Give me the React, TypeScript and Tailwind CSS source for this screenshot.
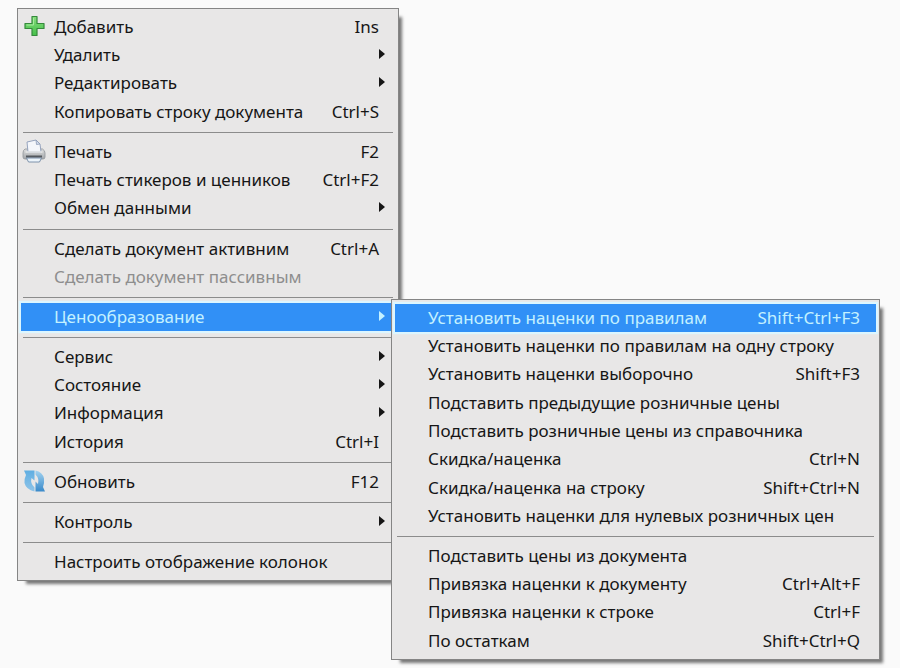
import { ReactNode } from 'react'
import clsx from 'clsx'

interface MenuItem {
  label: string
  shortcut?: string
  icon?: ReactNode
  disabled?: boolean
  active?: boolean
  submenu?: boolean
  children?: MenuItem[][]
}

function PlusIcon() {
  return (
    <svg viewBox="0 0 24 24" className="size-6" aria-hidden="true">
      <defs>
        <linearGradient id="plus" x1="0" y1="0" x2="0" y2="1">
          <stop offset="0" stopColor="#86dd7c" />
          <stop offset="1" stopColor="#45c04a" />
        </linearGradient>
      </defs>
      <path
        d="M10 2.500h5v7h7v5h-7v7h-5v-7h-7v-5h7z"
        fill="url(#plus)"
        stroke="#358a3c"
        strokeWidth="1.2"
        strokeLinejoin="round"
      />
      <path d="M11.500 4v7H4.500" fill="none" stroke="#a5eb9c" strokeWidth="1" />
    </svg>
  )
}

function PrinterIcon() {
  return (
    <svg viewBox="0 0 24 24" className="size-6" aria-hidden="true">
      <defs>
        <linearGradient id="printer" x1="0" y1="0" x2="0" y2="1">
          <stop offset="0" stopColor="#dcdddd" />
          <stop offset="0.5" stopColor="#bfc1c3" />
          <stop offset="1" stopColor="#a3a6aa" />
        </linearGradient>
      </defs>
      <path
        d="M3 10h17.500q2.500 1.500 2.500 4v4q0 2-2 2H3q-2 0-2-2v-4q0-3 2-4z"
        fill="url(#printer)"
        stroke="#909499"
        strokeWidth="0.8"
      />
      <path d="M6 13L5 3l9-2 4 4 1 8z" fill="#f4f6fb" stroke="#8b9bb8" strokeWidth="0.9" />
      <path d="M14 1l.5 4.500L18 5z" fill="#d3dcec" stroke="#8b9bb8" strokeWidth="0.8" />
      <path d="M3.500 13h17" stroke="#e9eaea" strokeWidth="1.5" />
      <path d="M4 17.500h16" stroke="#54595f" strokeWidth="2" />
      <path d="M4.500 19h15l-2 4h-11z" fill="#edf5fb" stroke="#7389a3" strokeWidth="0.9" />
    </svg>
  )
}

function RefreshIcon() {
  return (
    <svg viewBox="0 0 24 24" className="size-6" aria-hidden="true">
      <defs>
        <linearGradient id="refresh-left" x1="0" y1="0" x2="0" y2="1">
          <stop offset="0" stopColor="#5faee2" />
          <stop offset="1" stopColor="#8fc4e8" />
        </linearGradient>
        <linearGradient id="refresh-right" x1="0" y1="0" x2="0" y2="1">
          <stop offset="0" stopColor="#a3d3f0" />
          <stop offset="1" stopColor="#3a8aca" />
        </linearGradient>
      </defs>
      <path
        d="M2 1.500h10.500v10L9.500 9q-1.500 5.500 3 9.500v4Q4 20.500 2.500 14q-.5-4 1.500-8z"
        fill="url(#refresh-left)"
      />
      <path
        d="M23 22.500H13.500v-10l2.500 2.500q1.500-5.500-2.500-9.500v-4Q20.500 3 22 9.500q.5 4.500-1 8.500z"
        fill="url(#refresh-right)"
      />
    </svg>
  )
}

const pricingMenu: MenuItem[][] = [
  [
    { label: 'Установить наценки по правилам', shortcut: 'Shift+Ctrl+F3', active: true },
    { label: 'Установить наценки по правилам на одну строку' },
    { label: 'Установить наценки выборочно', shortcut: 'Shift+F3' },
    { label: 'Подставить предыдущие розничные цены' },
    { label: 'Подставить розничные цены из справочника' },
    { label: 'Скидка/наценка', shortcut: 'Ctrl+N' },
    { label: 'Скидка/наценка на строку', shortcut: 'Shift+Ctrl+N' },
    { label: 'Установить наценки для нулевых розничных цен' }
  ],
  [
    { label: 'Подставить цены из документа' },
    { label: 'Привязка наценки к документу', shortcut: 'Ctrl+Alt+F' },
    { label: 'Привязка наценки к строке', shortcut: 'Ctrl+F' },
    { label: 'По остаткам', shortcut: 'Shift+Ctrl+Q' }
  ]
]

const mainMenu: MenuItem[][] = [
  [
    { label: 'Добавить', shortcut: 'Ins', icon: <PlusIcon /> },
    { label: 'Удалить', submenu: true },
    { label: 'Редактировать', submenu: true },
    { label: 'Копировать строку документа', shortcut: 'Ctrl+S' }
  ],
  [
    { label: 'Печать', shortcut: 'F2', icon: <PrinterIcon /> },
    { label: 'Печать стикеров и ценников', shortcut: 'Ctrl+F2' },
    { label: 'Обмен данными', submenu: true }
  ],
  [
    { label: 'Сделать документ активним', shortcut: 'Ctrl+A' },
    { label: 'Сделать документ пассивным', disabled: true }
  ],
  [{ label: 'Ценообразование', submenu: true, active: true, children: pricingMenu }],
  [
    { label: 'Сервис', submenu: true },
    { label: 'Состояние', submenu: true },
    { label: 'Информация', submenu: true },
    { label: 'История', shortcut: 'Ctrl+I' }
  ],
  [{ label: 'Обновить', shortcut: 'F12', icon: <RefreshIcon /> }],
  [{ label: 'Контроль', submenu: true }],
  [{ label: 'Настроить отображение колонок' }]
]

function MenuRow({ item }: { item: MenuItem }) {
  return (
    <li role="none" className="relative nth-[3n]:mb-px">
      <button
        type="button"
        role="menuitem"
        disabled={item.disabled}
        aria-haspopup={item.submenu ? 'menu' : undefined}
        aria-expanded={item.children ? true : undefined}
        className={clsx(
          'flex h-7 w-full items-center pr-4 pl-px text-left whitespace-nowrap',
          item.active && 'bg-[#3190f6] text-[#c4f1ff] shadow-[0_0_1px_2px_#dcf6ff]',
          item.disabled && 'text-[#8e8e8e]',
          !item.active && !item.disabled && 'text-[#161616]'
        )}
      >
        <span className="flex w-8 shrink-0 items-center pb-0.5">{item.icon}</span>
        <span className="grow">{item.label}</span>
        {item.shortcut && <span>{item.shortcut}</span>}
        {item.submenu && (
          <span className="-mr-1.5 pb-0.5">
            <svg viewBox="0 0 6 10" className="h-2.5 w-1.5" fill="currentColor" aria-hidden="true">
              <path d="M0 0l6 5-6 5z" />
            </svg>
          </span>
        )}
      </button>
      {item.children && (
        <div className="absolute -top-1 left-full z-10 -ml-1">
          <Menu groups={item.children} label={item.label} nested />
        </div>
      )}
    </li>
  )
}

interface MenuProps {
  groups: MenuItem[][]
  label: string
  nested?: boolean
}

function Menu({ groups, label, nested }: MenuProps) {
  return (
    <div
      role="menu"
      aria-label={label}
      className={clsx(
        'border border-[#858585] bg-[#e8e7e7] px-[3px] py-1 shadow-[6px_6px_3px_-3px_#777]',
        nested ? 'w-[489px]' : 'w-[382px]'
      )}
    >
      {groups.map((group, index) => (
        <div key={index} role="none">
          {index > 0 && (
            <div role="separator" className="flex h-3 items-center px-0.5">
              <div className="h-px w-full bg-[#8c8c8c]" />
            </div>
          )}
          <ul role="none">
            {group.map((item) => (
              <MenuRow key={item.label} item={item} />
            ))}
          </ul>
        </div>
      ))}
    </div>
  )
}

export default function App() {
  return (
    <main className="min-h-screen bg-[#fafafa] pt-2 pl-[17px] font-['Noto_Sans',sans-serif] text-[17px]">
      <Menu groups={mainMenu} label="Документ" />
    </main>
  )
}
